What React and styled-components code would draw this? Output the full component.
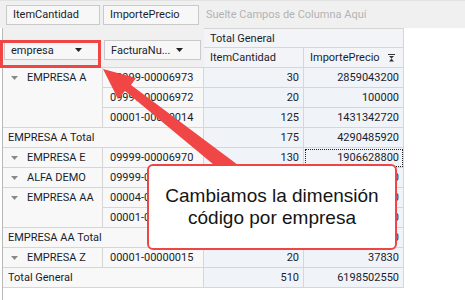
import React from "react";
import styled, { createGlobalStyle } from "styled-components";

const GlobalStyle = createGlobalStyle`
    html, body {
        margin: 0;
        padding: 0;
        background: #ffffff;
    }
    body {
        font-family: Roboto, "Liberation Sans", sans-serif;
        font-size: 11px;
        color: #1a1d2c;
    }
`;

const rows = [
    { head: "EMPRESA A", span: 3, factura: "09999-00006973", qty: 30, amount: 2859043200 },
    { factura: "09999-00006972", qty: 20, amount: 100000 },
    { factura: "00001-00000014", qty: 125, amount: 1431342720 },
    { total: "EMPRESA A Total", qty: 175, amount: 4290485920 },
    { head: "EMPRESA E", span: 1, factura: "09999-00006970", qty: 130, amount: 1906628800, focused: true },
    { head: "ALFA DEMO", span: 1, factura: "09999-00006969", qty: 60, amount: 450000 },
    { head: "EMPRESA AA", span: 2, factura: "00004-00000021", qty: 100, amount: 800000 },
    { factura: "00001-00000016", qty: 25, amount: 100000 },
    { total: "EMPRESA AA Total", qty: 125, amount: 900000 },
    { head: "EMPRESA Z", span: 1, factura: "00001-00000015", qty: 20, amount: 37830 },
    { total: "Total General", qty: 510, amount: 6198502550 },
];

const Caret = () => (
    <svg width="7" height="4" viewBox="0 0 7 4">
        <path d="M0 0 H7 L3.5 4 Z" fill="#222" />
    </svg>
);

const SortIcon = () => (
    <svg width="7" height="8" viewBox="0 0 7 8">
        <path d="M0 0.5 H7" stroke="#333" strokeWidth="1" />
        <path d="M1 2 H6 L3.5 4.5 Z M3.5 4.5 L6 7.5 H1 Z" fill="#333" />
    </svg>
);

const App = () => {
    return (
        <Page>
            <GlobalStyle />
            <TopBar>
                <FieldButton $width={94}>ItemCantidad</FieldButton>
                <FieldButton $width={96}>ImportePrecio</FieldButton>
                <DropHint>Suelte Campos de Columna Aquí</DropHint>
            </TopBar>

            <Pivot>
                <RowArea>
                    <FieldButton $width={96} $drop>
                        empresa
                        <Caret />
                    </FieldButton>
                    <FieldButton $width={97} $drop>
                        FacturaNu...
                        <Caret />
                    </FieldButton>
                </RowArea>
                <ColHeader $wide>Total General</ColHeader>
                <ColHeader>ItemCantidad</ColHeader>
                <ColHeader $sort>
                    ImportePrecio
                    <SortIcon />
                </ColHeader>

                {rows.map((r, i) => (
                    <React.Fragment key={i}>
                        {r.head && (
                            <RowHead style={{ gridRow: `span ${r.span}` }}>
                                <Expander>
                                    <Caret />
                                </Expander>
                                {r.head}
                            </RowHead>
                        )}
                        {r.total ? (
                            <TotalHead>{r.total}</TotalHead>
                        ) : (
                            <RowHead>{r.factura}</RowHead>
                        )}
                        <Value>{r.qty}</Value>
                        <Value $focused={r.focused}>{r.amount}</Value>
                    </React.Fragment>
                ))}
            </Pivot>

            <Highlight />
            <Arrow viewBox="0 0 465 300">
                <polygon
                    points="103,69 136,78 131,85 246,171 237,184 125,91 118,99"
                    fill="#f04646"
                />
            </Arrow>
            <Callout>
                Cambiamos la dimensión
                <br />
                código por empresa
            </Callout>
        </Page>
    );
};

const Page = styled.div`
    position: relative;
    width: 465px;
    height: 300px;
    overflow: hidden;
    display: flex;
    flex-direction: column;
`;

const TopBar = styled.div`
    height: 28px;
    flex: none;
    display: flex;
    align-items: center;
    gap: 3px;
    padding-left: 6px;
    background: #f0f0f0;
    box-sizing: border-box;
    border-top: 1px solid #e2e2e2;
`;

const FieldButton = styled.div`
    width: ${(p) => p.$width}px;
    height: 20px;
    box-sizing: border-box;
    display: flex;
    align-items: center;
    justify-content: ${(p) => (p.$drop ? "space-between" : "flex-start")};
    padding: 0 ${(p) => (p.$drop ? "17px" : "6px")} 0 6px;
    background: #f7f7f7;
    border: 1px solid #c9c9c9;
    white-space: nowrap;
`;

const DropHint = styled.span`
    margin-left: 4px;
    color: #b3b3b3;
`;

const Pivot = styled.div`
    flex: 1;
    margin-left: 2px;
    border-left: 1px solid #b9b9b9;
    display: grid;
    grid-template-columns: 100px 101px 100px 100px;
    grid-auto-rows: 20px;
    align-content: start;
    justify-content: start;
`;

const RowArea = styled.div`
    grid-column: 1 / 3;
    grid-row: 1 / 3;
    background: #f0f0f0;
    display: flex;
    align-items: center;
    gap: 4px;
    padding: 5px 0 0 1px;
    border-bottom: 1px solid #d6d6d6;
    box-sizing: border-box;
`;

const Cell = styled.div`
    box-sizing: border-box;
    border-right: 1px solid #d6d6d6;
    border-bottom: 1px solid #d6d6d6;
    display: flex;
    align-items: center;
    white-space: nowrap;
    overflow: hidden;
`;

const ColHeader = styled(Cell)`
    grid-column: ${(p) => (p.$wide ? "3 / 5" : "auto")};
    border-top: ${(p) => (p.$wide ? "1px solid #d6d6d6" : "none")};
    background: #f3f4f7;
    padding: 0 6px 0 6px;
    justify-content: ${(p) => (p.$sort ? "space-between" : "flex-start")};
    padding-right: ${(p) => (p.$sort ? "8px" : "6px")};
`;

const RowHead = styled(Cell)`
    grid-column: auto;
    align-items: flex-start;
    padding: 3px 0 0 7px;
    background: #f8f8f8;
`;

const Expander = styled.span`
    display: inline-flex;
    margin: 5px 9px 0 1px;

    svg path {
        fill: #8a8a8a;
    }
`;

const TotalHead = styled(Cell)`
    grid-column: 1 / 3;
    padding-left: 5px;
    background: #f8f8f8;
`;

const Value = styled(Cell)`
    justify-content: flex-end;
    padding-right: 4px;
    background: #f0f3f8;
    outline: ${(p) => (p.$focused ? "1px dotted #222" : "none")};
    outline-offset: -2px;
`;

const Highlight = styled.div`
    position: absolute;
    left: 0;
    top: 40px;
    width: 101px;
    height: 28px;
    box-sizing: border-box;
    border: 3px solid #ef4545;
`;

const Arrow = styled.svg`
    position: absolute;
    left: 0;
    top: 0;
    width: 465px;
    height: 300px;
    pointer-events: none;
`;

const Callout = styled.div`
    position: absolute;
    left: 147px;
    top: 164px;
    width: 250px;
    height: 86px;
    box-sizing: border-box;
    border: 2px solid #ef4545;
    border-radius: 6px;
    background: #ffffff;
    display: flex;
    align-items: center;
    justify-content: center;
    text-align: center;
    font-family: "Liberation Sans", Arial, sans-serif;
    font-size: 19px;
    line-height: 22px;
    color: #141414;
`;

export default App;
